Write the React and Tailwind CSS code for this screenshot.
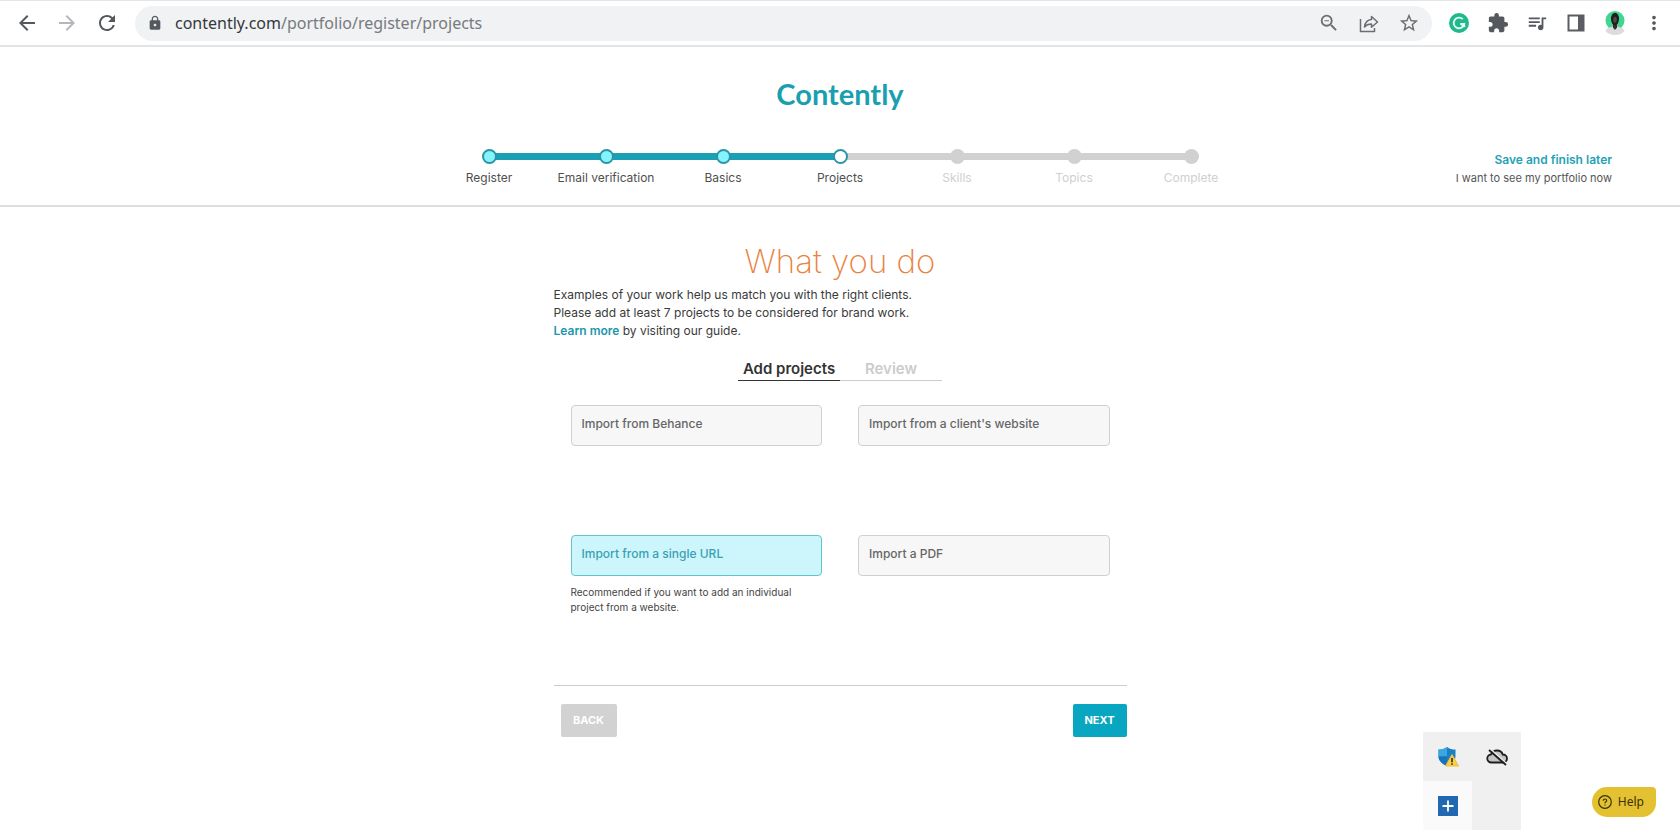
import { useState } from "react";
import clsx from "clsx";
import {
  MdArrowBack,
  MdArrowForward,
  MdExtension,
  MdLock,
  MdMoreVert,
  MdQueueMusic,
  MdRefresh,
  MdStarBorder,
  MdZoomOut,
} from "react-icons/md";

const steps = [
  { label: "Register", state: "done" },
  { label: "Email verification", state: "done" },
  { label: "Basics", state: "done" },
  { label: "Projects", state: "current" },
  { label: "Skills", state: "todo" },
  { label: "Topics", state: "todo" },
  { label: "Complete", state: "todo" },
];

const sources = [
  { id: "behance", label: "Import from Behance" },
  { id: "client", label: "Import from a client's website" },
  {
    id: "url",
    label: "Import from a single URL",
    hint: "Recommended if you want to add an individual project from a website.",
  },
  { id: "pdf", label: "Import a PDF" },
];

function ShareIcon() {
  return (
    <svg viewBox="0 0 22 22" className="size-[22px]" fill="none" stroke="#6b6e72" strokeWidth="1.5" strokeLinejoin="round">
      <path d="M2.5 7v12.5h14V16" />
      <path d="M6.5 15c.5-4 2.6-7 7-7.4V4.500l6 5.500-6 5.300v-3.200c-3.200 0-5.300.8-7 2.900z" />
    </svg>
  );
}

function GrammarlyIcon() {
  return (
    <svg viewBox="0 0 22 22" className="size-[22px]" fill="none">
      <circle cx="11" cy="11" r="10" fill="#1fb98c" />
      <path d="M14.800 7.200A5.300 5.300 0 1 0 16.200 12h-4" stroke="#e6fbf4" strokeWidth="1.900" />
      <path d="M13.500 14.500l2.700-2.500.6 3" stroke="#e6fbf4" strokeWidth="1.300" />
    </svg>
  );
}

function SidePanelIcon() {
  return (
    <svg viewBox="0 0 22 22" className="size-[22px]">
      <path d="M2.500 2.500h17v17h-17z" fill="#5a5d61" />
      <path d="M4.500 4.500h8.500v13H4.500z" fill="#fff" />
    </svg>
  );
}

function Avatar() {
  return (
    <svg viewBox="0 0 22 26" className="h-[26px] w-[22px]">
      <circle cx="11" cy="10.500" r="9.500" fill="#3fd692" />
      <path d="M1.500 21c1-3 4.500-4.500 9.500-4.500s8.500 1.500 9.500 4.500c-2 2.500-5.500 4-9.500 4s-7.500-1.500-9.500-4z" fill="#dcdcdf" />
      <path d="M9 13h4v4.500l-2 2.500-2-2.500z" fill="#3b2a27" />
      <ellipse cx="11" cy="9" rx="4" ry="6.200" fill="#1d2023" />
      <ellipse cx="11" cy="9.800" rx="1.800" ry="3" fill="#5b463f" />
    </svg>
  );
}

function BrowserBar() {
  return (
    <div className="flex h-[47px] items-center border-t border-b-2 border-t-[#e3e5e9] border-b-[#e3e4e6] bg-white px-[15px] text-[#55585c]">
      <div className="flex items-center gap-4">
        <button aria-label="Back"><MdArrowBack size={24} /></button>
        <button aria-label="Forward" className="text-[#b5b7ba]"><MdArrowForward size={24} /></button>
        <button aria-label="Reload"><MdRefresh size={24} /></button>
      </div>
      <div className="mx-4 flex h-[35px] min-w-0 flex-1 items-center rounded-full bg-[#f1f2f4] pr-3 pl-3">
        <MdLock size={16} />
        <p className="ml-3 flex-1 font-['Noto_Sans','Open_Sans',sans-serif] text-base text-[#35383c]">
          contently.com<span className="text-[#777a7e]">/portfolio/register/projects</span>
        </p>
        <div className="flex items-center gap-[18px] text-[#6b6e72]">
          <button aria-label="Zoom"><MdZoomOut size={22} /></button>
          <button aria-label="Share"><ShareIcon /></button>
          <button aria-label="Bookmark"><MdStarBorder size={22} /></button>
        </div>
      </div>
      <div className="flex items-center gap-[17px]">
        <button aria-label="Grammarly"><GrammarlyIcon /></button>
        <button aria-label="Extensions"><MdExtension size={22} /></button>
        <button aria-label="Media"><MdQueueMusic size={22} /></button>
        <button aria-label="Side panel"><SidePanelIcon /></button>
        <button aria-label="Profile"><Avatar /></button>
        <button aria-label="Menu"><MdMoreVert size={22} /></button>
      </div>
    </div>
  );
}

function Step({ step, index }) {
  const todo = step.state === "todo";
  const next = steps[index + 1];
  return (
    <li className="w-[117px]">
      <div className="flex h-4 items-center">
        <span
          className={clsx(
            "-mr-1 h-[7px] flex-1",
            index > 0 && (todo ? "bg-[#d1d1d1]" : "bg-[#1a9fb4]")
          )}
        />
        <span
          className={clsx(
            "z-10 size-[15px] rounded-full",
            step.state === "done" && "border-2 border-[#2a95a5] bg-[#84f3fb]",
            step.state === "current" && "border-2 border-[#2a95a5] bg-white",
            todo && "bg-[#d1d1d1]"
          )}
        />
        <span
          className={clsx(
            "-ml-1 h-[7px] flex-1",
            next && (step.state === "done" ? "bg-[#1a9fb4]" : "bg-[#d1d1d1]")
          )}
        />
      </div>
      <p
        className={clsx(
          "mt-[6px] text-center text-xs leading-4",
          todo ? "text-[#cfcfcf]" : "text-[#4f4f4f]"
        )}
      >
        {step.label}
      </p>
    </li>
  );
}

function Header() {
  return (
    <header className="border-b-2 border-[#dedede] pt-[27px] pb-[18px]">
      <h1 className="text-center font-['Lato',sans-serif] text-[29px] leading-10 font-bold text-[#1a9fb0]">
        Contently
      </h1>
      <div className="mt-[34px] grid grid-cols-[1fr_auto_1fr] items-start">
        <ol className="col-start-2 flex">
          {steps.map((step, i) => (
            <Step key={step.label} step={step} index={i} />
          ))}
        </ol>
        <div className="pt-[3px] pr-[68px] text-right">
          <a href="#later" className="block text-xs leading-[18px] font-semibold text-[#1fa3b5]">
            Save and finish later
          </a>
          <p className="text-[11px] leading-[18px] text-[#555]">I want to see my portfolio now</p>
        </div>
      </div>
    </header>
  );
}

function SourceCard({ source, selected, onSelect }) {
  return (
    <div className="min-h-[130px]">
      <button
        onClick={() => onSelect(source.id)}
        className={clsx(
          "h-[41px] w-full rounded border px-[10px] pb-1 text-left text-xs font-medium",
          selected
            ? "border-[#62c3cd] bg-[#ccf6fb] text-[#3c9fb4]"
            : "border-[#d0d0d0] bg-[#f7f7f7] text-[#666]"
        )}
      >
        {source.label}
      </button>
      {source.hint && (
        <p className="mt-[9px] text-[10px] leading-[15px] text-[#444]">{source.hint}</p>
      )}
    </div>
  );
}

function TrayPopup() {
  return (
    <div className="fixed right-[159px] bottom-[10px] grid grid-cols-2 bg-[#f0f0f0]">
      <button aria-label="Security" className="flex size-[49px] items-center justify-center">
        <svg viewBox="0 0 22 22" className="size-[22px]">
          <path d="M10 1c2.500 1.800 5 2.500 8.500 2.600V10c0 4.500-3.500 7.800-8.500 10-5-2.200-8.500-5.500-8.500-10V3.600C5 3.500 7.500 2.800 10 1z" fill="#1b7fc4" />
          <path d="M10 1v9.500H1.500V3.600C5 3.500 7.500 2.800 10 1z" fill="#3aa8e0" />
          <path d="M10 10.500V20c-5-2.200-8.500-5.300-8.500-9.500z" fill="#1873b8" />
          <path d="M15 8.500 21.500 20h-13z" fill="#f7cf4a" stroke="#f0bd3a" strokeLinejoin="round" />
          <path d="M15 12v4.200M15 17.300v1.500" stroke="#3b2c00" strokeWidth="1.600" />
        </svg>
      </button>
      <button aria-label="OneDrive" className="flex size-[49px] items-center justify-center">
        <svg viewBox="0 0 22 22" className="size-[22px]" fill="none" stroke="#1f1f1f" strokeWidth="1.800">
          <path d="M5.500 16.500a4 4 0 0 1-.5-8C6 6 8.300 4.500 11 4.500c2.800 0 5 1.600 5.700 4 2.500 0 4.300 1.700 4.300 4s-1.800 4-4 4z" fill="#c4c4c4" />
          <path d="M4.500 3 21 18" stroke="#f0f0f0" strokeWidth="1.500" />
          <path d="M3 4 20 19" />
        </svg>
      </button>
      <button aria-label="Add" className="flex size-[49px] items-center justify-center bg-[#fafafa]">
        <svg viewBox="0 0 20 20" className="size-5">
          <path d="M0 0h20v20H0z" fill="#2168b0" />
          <path d="M10 4.500v11M4.500 10h11" stroke="#fff" strokeWidth="1.800" />
        </svg>
      </button>
    </div>
  );
}

function HelpButton() {
  return (
    <button className="fixed right-6 bottom-[23px] flex h-[30px] items-center gap-[6px] rounded-l-[15px] rounded-tr rounded-br-[14px] bg-[#e3c130] pr-3 pl-[6px] font-['Noto_Sans','Open_Sans',sans-serif] text-xs text-[#3b3208]">
      <svg viewBox="0 0 14 14" className="size-[14px]" fill="none" stroke="currentColor" strokeWidth="1.200">
        <circle cx="7" cy="7" r="6.300" />
        <path d="M5.300 5.700c0-1 .7-1.700 1.700-1.700s1.700.7 1.700 1.600C8.700 6.800 7 6.900 7 8.300M7 9.400v1.200" />
      </svg>
      Help
    </button>
  );
}

export default function App() {
  const [tab, setTab] = useState("add");
  const [selected, setSelected] = useState("url");

  const tabClass = (active) =>
    clsx(
      "h-[22px] w-[102px] border-b pb-[2px] text-[15px] leading-[18px] font-semibold",
      active ? "border-[#333] text-[#333]" : "border-[#ccc] text-[#ccc]"
    );

  return (
    <div className="min-h-screen bg-white font-['Inter',sans-serif]">
      <BrowserBar />
      <Header />
      <main className="mx-auto max-w-[573px] pt-[34px]">
        <h2 className="text-center text-[33px] leading-10 font-extralight text-[#e8833f]">What you do</h2>
        <p className="mt-[5px] text-xs leading-[18px] text-[#3a3a3a]">
          Examples of your work help us match you with the right clients.
          <br />
          Please add at least 7 projects to be considered for brand work.
          <br />
          <a href="#guide" className="font-semibold text-[#1d97ab]">Learn more</a> by visiting our guide.
        </p>

        <div role="tablist" className="mt-[19px] flex justify-center">
          <button role="tab" aria-selected={tab === "add"} onClick={() => setTab("add")} className={tabClass(tab === "add")}>
            Add projects
          </button>
          <button role="tab" aria-selected={tab === "review"} onClick={() => setTab("review")} className={tabClass(tab === "review")}>
            Review
          </button>
        </div>

        <div className="mt-6 grid grid-cols-2 gap-x-9 px-[17px] pb-5">
          {sources.map((source) => (
            <SourceCard
              key={source.id}
              source={source}
              selected={selected === source.id}
              onSelect={setSelected}
            />
          ))}
        </div>

        <div className="flex justify-between border-t border-[#ccc] pt-[18px] pl-[7px] text-[11px] font-bold text-white">
          <button className="h-[33px] w-[56px] rounded-xs bg-[#d2d2d2]">BACK</button>
          <button className="h-[33px] w-[54px] rounded-xs bg-[#08a6c0]">NEXT</button>
        </div>
      </main>
      <TrayPopup />
      <HelpButton />
    </div>
  );
}
